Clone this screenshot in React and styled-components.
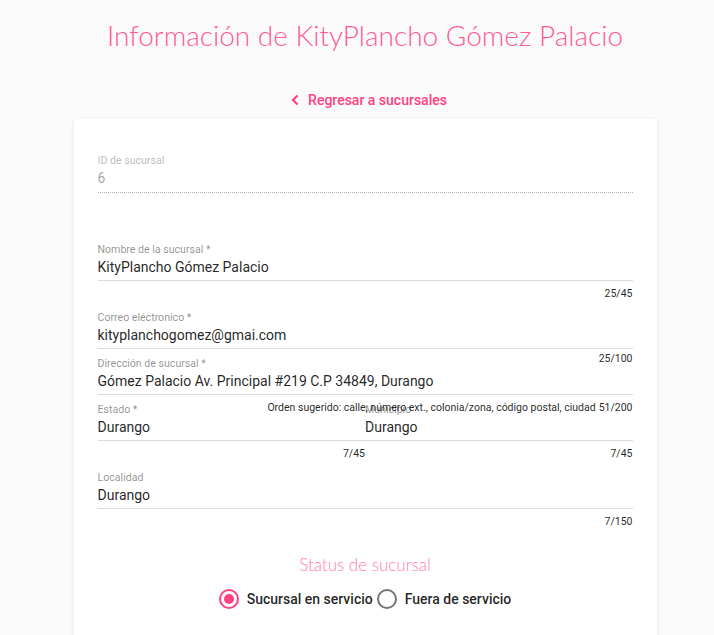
import React from "react";
import styled, { createGlobalStyle } from "styled-components";

const Global = createGlobalStyle`
  html, body { margin: 0; padding: 0; background: #fafafa; }
  body { font-family: Roboto, "Liberation Sans", sans-serif; color: rgba(0,0,0,.87); overflow: hidden; }
`;

const Page = styled.div`
  padding-left: 16px;
  display: flex;
  flex-direction: column;
  align-items: center;
`;

const Title = styled.h1`
  margin: 17px 0 0;
  font-family: Lato, "Open Sans", sans-serif;
  font-weight: 300;
  font-size: 28px;
  line-height: 36px;
  color: #ff5b93;
  text-align: center;
`;

const BackLink = styled.a`
  margin: 38px 0 0 7px;
  display: flex;
  align-items: center;
  gap: 8px;
  font-size: 14px;
  font-weight: 500;
  line-height: 18px;
  color: #ff4081;
  text-decoration: none;
  cursor: pointer;
`;

const Card = styled.div`
  margin-top: 10px;
  width: 583px;
  box-sizing: border-box;
  background: #fff;
  border-radius: 4px;
  box-shadow: 0 2px 2px -1px rgba(0,0,0,.12), 0 1px 5px 0 rgba(0,0,0,.08);
  padding: 35px 24px 40px;
`;

const Field = styled.div`
  display: flex;
  flex-direction: column;
  margin-bottom: ${p => p.$gap}px;
`;

const Label = styled.label`
  font-size: 10.6px;
  line-height: 14px;
  color: ${p => (p.$faint ? "rgba(0,0,0,.30)" : "rgba(0,0,0,.45)")};
  white-space: nowrap;
`;

const Value = styled.div`
  font-size: 14px;
  line-height: 20px;
  padding-bottom: ${p => (p.$disabled ? 4 : 3)}px;
  color: ${p => (p.$disabled ? "rgba(0,0,0,.38)" : "rgba(0,0,0,.87)")};
  border-bottom: 1px ${p => (p.$disabled ? "dotted" : "solid")} ${p => (p.$disabled ? "rgba(0,0,0,.3)" : "rgba(0,0,0,.14)")};
`;

const Details = styled.div`
  position: relative;
  z-index: 1;
  display: flex;
  justify-content: flex-end;
  gap: 3px;
  font-size: 10.5px;
  line-height: 12px;
  color: rgba(0,0,0,.87);
  white-space: nowrap;
  padding-top: ${p => (p.$collapsed ? 0 : 7)}px;
  height: ${p => (p.$collapsed ? "0" : "auto")};
  transform: translateY(${p => (p.$collapsed ? p.$top : 0)}px);
`;

const Row = styled.div`
  display: grid;
  grid-template-columns: 1fr 1fr;
`;

const StatusTitle = styled.h2`
  margin: 25px 0 0;
  font-family: Lato, "Open Sans", sans-serif;
  font-weight: 300;
  font-size: 17px;
  line-height: 24px;
  text-align: center;
  color: #ff80ab;
`;

const RadioGroup = styled.div`
  margin-top: 12px;
  display: flex;
  justify-content: center;
  align-items: center;
  gap: 4px;
`;

const RadioOption = styled.label`
  display: flex;
  align-items: center;
  gap: 8px;
  font-size: 14px;
  font-weight: 500;
  line-height: 20px;
  color: rgba(0,0,0,.87);
  cursor: pointer;
`;

const RadioCircle = styled.span`
  width: 20px;
  height: 20px;
  box-sizing: border-box;
  border-radius: 50%;
  border: 2px solid ${p => (p.$on ? "#ff4081" : "#757575")};
  display: flex;
  align-items: center;
  justify-content: center;
  &::after {
    content: "";
    width: 10px;
    height: 10px;
    border-radius: 50%;
    background: ${p => (p.$on ? "#ff4081" : "transparent")};
  }
`;

const NextSection = styled.div`
  margin-top: 27px;
  font-size: 13px;
  font-weight: 500;
  color: rgba(0,0,0,.6);
`;

const Chevron = () => (
  <svg width="10" height="12" viewBox="0 0 10 12" aria-hidden="true">
    <path d="M7.5 1.5 L3 6 L7.5 10.5" fill="none" stroke="#ff4081" strokeWidth="2.2" />
  </svg>
);

function TextField({ label, value, counter, hint, collapsed, disabled, gap, top = 0 }) {
  const g = gap !== undefined ? gap : collapsed ? 8 : 11;
  return (
    <Field $gap={g}>
      <Label $faint={disabled}>{label}</Label>
      <Value $disabled={disabled}>{value}</Value>
      {!disabled && (
        <Details $collapsed={collapsed} $top={top}>
          {hint && <span>{hint}</span>}
          {counter && <span>{counter}</span>}
        </Details>
      )}
    </Field>
  );
}

export default function App() {
  return (
    <>
      <Global />
      <Page>
        <Title>Información de KityPlancho Gómez Palacio</Title>
        <BackLink>
          <Chevron />
          Regresar a sucursales
        </BackLink>
        <Card>
          <TextField label="ID de sucursal" value="6" disabled gap={50} />
          <TextField label="Nombre de la sucursal *" value="KityPlancho Gómez Palacio" counter="25/45" />
          <TextField label="Correo eléctronico *" value="kityplanchogomez@gmai.com" counter="25/100" collapsed top={4} />
          <TextField
            label="Dirección de sucursal *"
            value="Gómez Palacio Av. Principal #219 C.P 34849, Durango"
            hint="Orden sugerido: calle, número ext., colonia/zona, código postal, ciudad"
            counter="51/200"
            collapsed
            top={7}
          />
          <Row>
            <TextField label="Estado *" value="Durango" counter="7/45" />
            <TextField label="Municipio" value="Durango" counter="7/45" />
          </Row>
          <TextField label="Localidad" value="Durango" counter="7/150" />
          <StatusTitle>Status de sucursal</StatusTitle>
          <RadioGroup>
            <RadioOption>
              <RadioCircle $on />
              Sucursal en servicio
            </RadioOption>
            <RadioOption>
              <RadioCircle />
              Fuera de servicio
            </RadioOption>
          </RadioGroup>
          <NextSection>Horario de atención</NextSection>
        </Card>
      </Page>
    </>
  );
}
